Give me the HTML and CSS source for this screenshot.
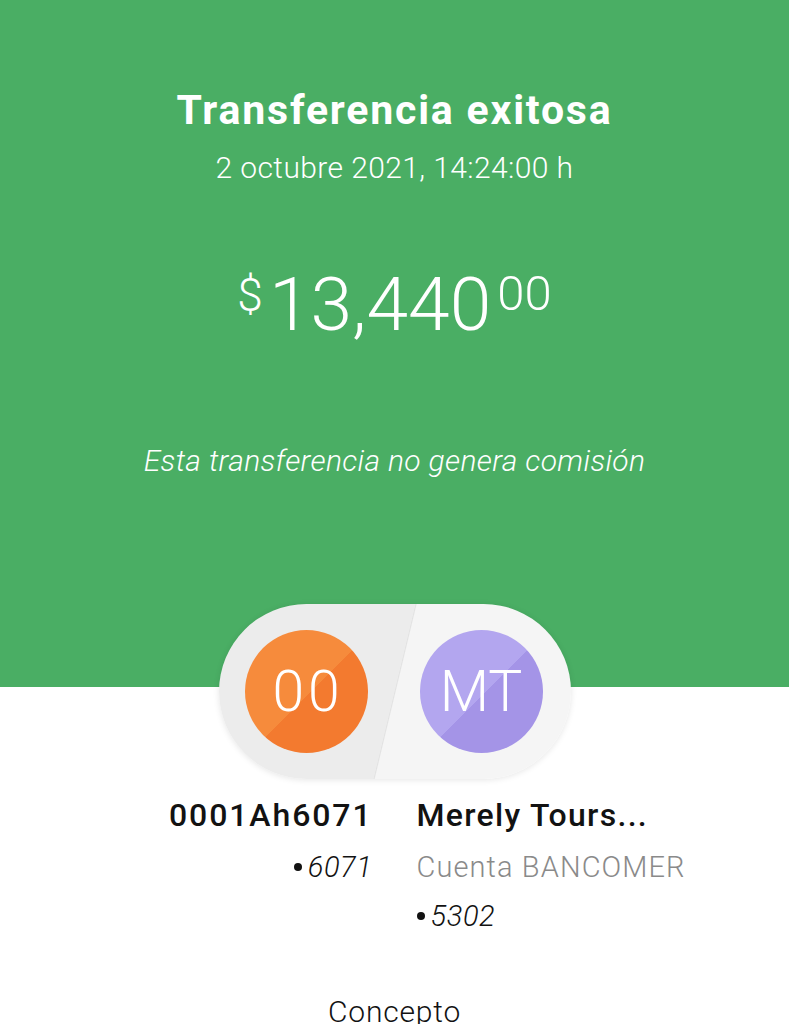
FILE: index.html
```html
<!DOCTYPE html>
<html lang="es">

<head>
    <meta charset="UTF-8">
    <title>Transferencia exitosa</title>
    <link rel="stylesheet" href="styles.css">
</head>

<body>
    <header class="summary">
        <h1 class="title">Transferencia exitosa</h1>
        <p class="date">2 octubre 2021, 14:24:00 h</p>

        <p class="amount">
            <span class="currency">$</span><span class="integer">13,440</span><span class="cents">00</span>
        </p>

        <p class="fee">Esta transferencia no genera comisión</p>
    </header>

    <div class="accounts">
        <div class="avatar avatar-orange">00</div>
        <div class="avatar avatar-purple">MT</div>
    </div>

    <div class="parties">
        <div class="party party-from">
            <div class="party-name">0001Ah6071</div>
            <div class="party-number"><span class="dot"></span>6071</div>
        </div>
        <div class="party party-to">
            <div class="party-name party-name-wide">Merely Tours...</div>
            <div class="party-bank">Cuenta BANCOMER</div>
            <div class="party-number"><span class="dot"></span>5302</div>
        </div>
    </div>

    <p class="concept">Concepto</p>
</body>

</html>
```

FILE: styles.css
```css
body {
    margin: 0;
    font-family: Roboto, "Liberation Sans", sans-serif;
    color: #121212;
    background: #fff;
}

p,
h1 {
    margin: 0;
}

/* Green header */

.summary {
    background: #4aae64;
    color: #fff;
    text-align: center;
    padding: 86px 0 208px;
}

.title {
    font-size: 41px;
    line-height: 48px;
    font-weight: 700;
    letter-spacing: 1.8px;
}

.date {
    margin-top: 16px;
    font-size: 30px;
    line-height: 36px;
    font-weight: 300;
    letter-spacing: 0.4px;
}

.amount {
    margin-top: 73px;
    font-size: 75px;
    line-height: 90px;
    font-weight: 300;
}

.currency,
.cents {
    line-height: 0;
}

.currency {
    font-size: 46px;
    vertical-align: 19px;
    margin-right: 6px;
}

.cents {
    font-size: 49px;
    vertical-align: 20px;
    margin-left: 6px;
}

.fee {
    margin-top: 94px;
    font-size: 30px;
    line-height: 36px;
    font-weight: 300;
    font-style: italic;
    letter-spacing: 0.35px;
}

/* Avatars pill */

.accounts {
    width: 352px;
    height: 175px;
    box-sizing: border-box;
    margin: -83px auto 0;
    padding: 0 28px 0 26px;
    border-radius: 88px;
    display: flex;
    align-items: center;
    justify-content: space-between;
    background: linear-gradient(103.5deg, #ececec 49.8%, #e2e2e2 50%, #f5f5f5 50.3%);
    box-shadow: 0 1px 6px rgb(0 0 0 / 10%);
}

.avatar {
    width: 123px;
    height: 123px;
    border-radius: 50%;
    display: flex;
    align-items: center;
    justify-content: center;
    color: #fff;
    font-size: 57px;
    font-weight: 300;
}

.avatar-orange {
    letter-spacing: 4px;
    text-indent: 4px;
    background: linear-gradient(135deg, #f68b3c 52%, #f37a2f 52%);
}

.avatar-purple {
    background: linear-gradient(135deg, #b3a6ef 52%, #a494e7 52%);
}

/* Names */

.parties {
    margin-top: 16px;
    display: grid;
    grid-template-columns: 1fr 1fr;
    column-gap: 44px;
}

.party-from {
    text-align: right;
}

.party-name {
    font-size: 32px;
    line-height: 40px;
    font-weight: 500;
    letter-spacing: 1.9px;
}

.party-name-wide {
    letter-spacing: 1.3px;
}

.party-bank,
.party-number {
    font-size: 29px;
    line-height: 49px;
    font-weight: 300;
}

.party-from .party-number,
.party-bank {
    margin-top: 8px;
}

.party-bank {
    color: #8a8a8a;
    letter-spacing: 1.1px;
}

.party-number {
    font-style: italic;
    letter-spacing: 0.6px;
}

.dot {
    display: inline-block;
    width: 8px;
    height: 8px;
    border-radius: 50%;
    background: #121212;
    margin-right: 6px;
    vertical-align: 6px;
}

.concept {
    margin-top: 53px;
    text-align: center;
    font-size: 30px;
    line-height: 36px;
    font-weight: 300;
    letter-spacing: 0.8px;
}
```
